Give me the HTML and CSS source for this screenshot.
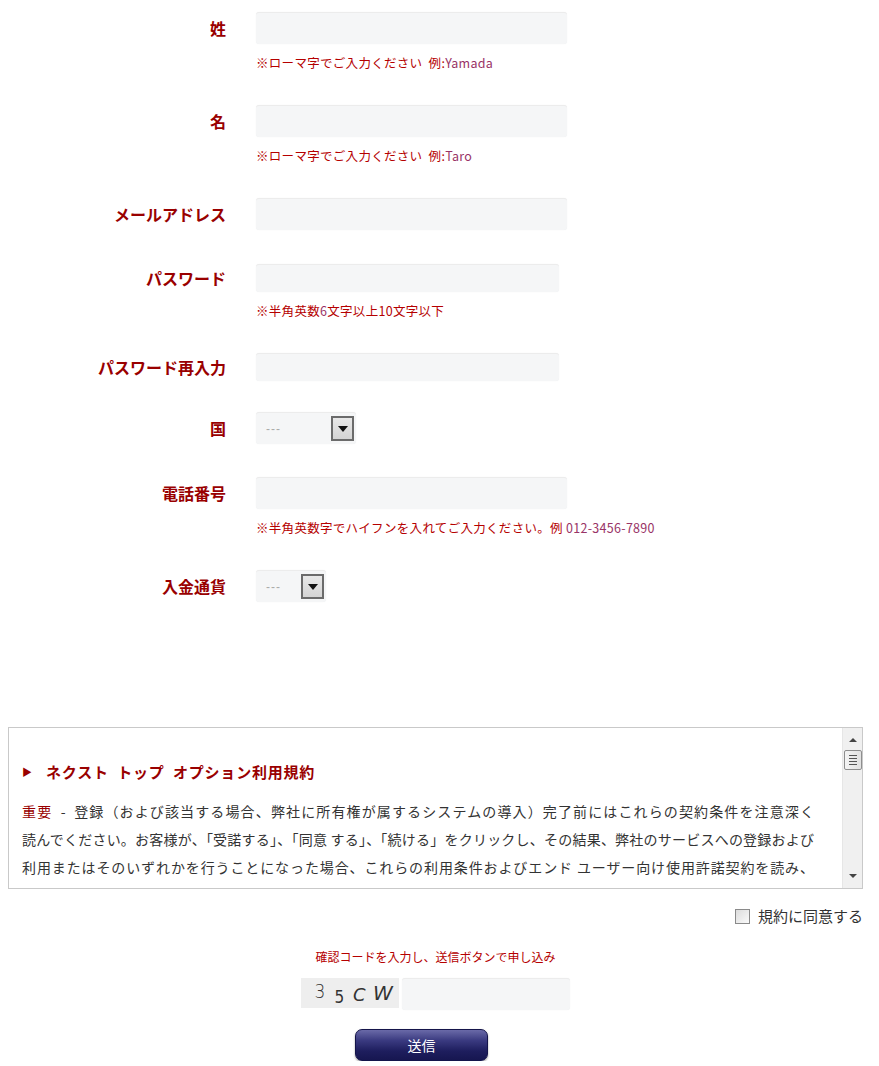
FILE: index.html
```html
<!DOCTYPE html>
<html lang="ja">
<head>
<meta charset="utf-8">
<title>登録フォーム</title>
<link rel="stylesheet" href="styles.css">
</head>
<body>
<div class="page">
  <form class="form">
    <div class="row">
      <label class="lbl">姓</label>
      <div class="field"><input class="inp" type="text"></div>
      <p class="hint">※ローマ字でご入力ください&nbsp; 例:<span class="ex">Yamada</span></p>
    </div>
    <div class="row">
      <label class="lbl">名</label>
      <div class="field"><input class="inp" type="text"></div>
      <p class="hint">※ローマ字でご入力ください&nbsp; 例:<span class="ex">Taro</span></p>
    </div>
    <div class="row">
      <label class="lbl">メールアドレス</label>
      <div class="field"><input class="inp" type="text"></div>
    </div>
    <div class="row">
      <label class="lbl">パスワード</label>
      <div class="field"><input class="inp pw" type="password"></div>
      <p class="hint">※半角英数<span class="ex">6</span>文字以上<span class="num">10</span>文字以下</p>
    </div>
    <div class="row r-tight">
      <label class="lbl">パスワード再入力</label>
      <div class="field"><input class="inp pw" type="password"></div>
    </div>
    <div class="row r-mid">
      <label class="lbl">国</label>
      <div class="field">
        <div class="sel sel-country"><span class="sel-val">---</span><span class="sel-btn"><span class="tri"></span></span></div>
      </div>
    </div>
    <div class="row">
      <label class="lbl">電話番号</label>
      <div class="field"><input class="inp" type="text"></div>
      <p class="hint">※半角英数字でハイフンを入れてご入力ください。例 <span class="ex">012-3456-7890</span></p>
    </div>
    <div class="row r-last">
      <label class="lbl">入金通貨</label>
      <div class="field">
        <div class="sel sel-cur"><span class="sel-val">---</span><span class="sel-btn"><span class="tri"></span></span></div>
      </div>
    </div>
  </form>

  <div class="terms">
    <div class="terms-body">
      <h3 class="terms-title"><span class="arrow">▶</span>ネクスト&nbsp; トップ&nbsp; オプション利用規約</h3>
      <div class="terms-text">
        <span class="tl"><span class="imp">重要</span>&nbsp; -&nbsp; 登録（および該当する場合、弊社に所有権が属するシステムの導入）完了前にはこれらの契約条件を注意深く</span>
        <span class="tl">読んでください。お客様が、「受諾する」、「同意 する」、「続ける」をクリックし、その結果、弊社のサービスへの登録および</span>
        <span class="tl">利用またはそのいずれかを行うことになった場合、これらの利用条件およびエンド ユーザー向け使用許諾契約を読み、</span>
      </div>
    </div>
    <div class="sbar">
      <span class="sb-up"></span>
      <span class="sb-thumb"><i></i><i></i><i></i><i></i></span>
      <span class="sb-fill"></span>
      <span class="sb-down"></span>
    </div>
  </div>

  <div class="agree">
    <label class="agree-lbl"><span class="cbox"></span>規約に同意する</label>
  </div>

  <p class="cap-note">確認コードを入力し、送信ボタンで申し込み</p>
  <div class="cap-row">
    <div class="cap-img"><span class="c1">3</span><span class="c2">5</span><span class="c3">C</span><span class="c4">W</span></div>
    <input class="cap-inp" type="text">
  </div>
  <div class="btn-row">
    <button class="submit" type="button">送信</button>
  </div>
</div>
</body>
</html>
```

FILE: styles.css
```css
* { box-sizing: border-box; }
html, body { margin: 0; padding: 0; background: #fff; }
body {
  font-family: "Noto Sans CJK JP", "Noto Sans", "Liberation Sans", sans-serif;
  color: #333;
}
.page {
  width: 871px;
  padding: 12px 0 0 8px;
}
.form { margin: 0; }
.row {
  display: grid;
  grid-template-columns: 218px 1fr;
  grid-template-rows: 32px auto;
  column-gap: 30px;
  margin-bottom: 34px;
}
.row.r-tight { margin-bottom: 31px; }
.row.r-mid { margin-bottom: 33px; }
.row.r-last { margin-bottom: 125px; }
.row:has(.pw) { grid-template-rows: 28px auto; }
.lbl {
  grid-column: 1;
  grid-row: 1;
  align-self: center;
  text-align: right;
  font-size: 16px;
  font-weight: bold;
  color: #990000;
  line-height: 20px;
  height: 20px;
  white-space: nowrap;
}
.field { grid-column: 2; grid-row: 1; display: flex; }
.inp {
  display: block;
  width: 311px;
  height: 32px;
  border: none;
  border-top: 1px solid #ececec;
  border-radius: 3px;
  background: #f5f6f7;
  box-shadow: 0 0 1px rgba(0,0,0,0.08);
  margin: 0;
  padding: 0 6px;
  outline: none;
}
.inp.pw { width: 303px; height: 28px; }
.hint {
  grid-column: 2;
  grid-row: 2;
  margin: 10px 0 0;
  height: 17px;
  overflow: visible;
  font-size: 12.5px;
  line-height: 17px;
  letter-spacing: 0.3px;
  color: #b50000;
  white-space: nowrap;
}
.hint .ex { color: #993366; }
.hint .num { color: #b50000; }

.sel {
  display: flex;
  align-items: center;
  height: 32px;
  background: #f5f6f7;
  border-top: 1px solid #ececec;
  border-radius: 3px;
  box-shadow: 0 0 1px rgba(0,0,0,0.08);
  padding: 0 2px 0 10px;
}
.sel-country { width: 100px; }
.sel-cur { width: 70px; }
.sel-val {
  flex: 1;
  font-size: 12px;
  color: #aaa;
  font-family: "Liberation Sans", sans-serif;
  letter-spacing: 1px;
}
.sel-btn {
  width: 23px;
  height: 25px;
  border: 2px solid #6b6b6b;
  background: linear-gradient(#e8e8e8, #d4d4d4);
  display: flex;
  align-items: center;
  justify-content: center;
}
.tri {
  width: 0; height: 0;
  border-left: 5px solid transparent;
  border-right: 5px solid transparent;
  border-top: 6px solid #111;
}

.terms {
  width: 855px;
  height: 162px;
  border: 1px solid #c9c9c9;
  display: flex;
  overflow: hidden;
}
.terms-body {
  flex: 1;
  overflow: hidden;
  padding: 30px 0 0 13px;
}
.terms-title {
  margin: 0 0 11px;
  height: 28px;
  font-size: 15px;
  font-weight: bold;
  color: #990000;
  line-height: 28px;
  letter-spacing: 0.8px;
  white-space: nowrap;
}
.arrow {
  display: inline-block;
  font-size: 10px;
  width: 24px;
  letter-spacing: 0;
  vertical-align: 2px;
}
.terms-text {
  font-size: 14px;
  line-height: 28px;
  color: #333;
}
.tl {
  display: block;
  width: 792px;
  height: 28px;
  white-space: nowrap;
  text-align: justify;
  text-align-last: justify;
  text-justify: inter-character;
}
.imp { color: #990000; }
.sbar {
  width: 20px;
  background: #f0f0f0;
  border-left: 1px solid #e6e6e6;
  display: flex;
  flex-direction: column;
  align-items: center;
}
.sb-up, .sb-down {
  width: 0; height: 0;
  border-left: 4px solid transparent;
  border-right: 4px solid transparent;
}
.sb-up { border-bottom: 4px solid #444; margin-top: 10px; }
.sb-down { border-top: 4px solid #444; margin-bottom: 10px; }
.sb-thumb {
  width: 18px;
  height: 20px;
  margin-top: 8px;
  border: 1px solid #8e8e8e;
  border-radius: 2px;
  background: linear-gradient(90deg, #f4f4f4, #e2e2e2);
  display: flex;
  flex-direction: column;
  justify-content: center;
  align-items: center;
  gap: 2px;
}
.sb-thumb i { display: block; width: 8px; height: 1px; background: #555; }
.sb-fill { flex: 1; }

.agree {
  width: 855px;
  display: flex;
  justify-content: flex-end;
  margin-top: 17px;
}
.agree-lbl {
  display: flex;
  align-items: center;
  font-size: 15px;
  line-height: 20px;
  color: #333;
}
.cbox {
  width: 15px;
  height: 15px;
  border: 1px solid #8a8a8a;
  background: linear-gradient(135deg, #dcdcdc, #fafafa);
  margin-right: 8px;
}
.cap-note {
  width: 855px;
  margin: 22px 0 0;
  text-align: center;
  font-size: 12px;
  line-height: 17px;
  color: #b50000;
}
.cap-row {
  width: 855px;
  margin-top: 13px;
  display: flex;
  justify-content: center;
  gap: 3px;
}
.cap-img {
  width: 98px;
  height: 30px;
  background: #eeeeee;
  display: flex;
  align-items: center;
  padding-left: 12px;
  font-family: "DejaVu Sans", sans-serif;
  font-size: 20px;
  color: #333;
}
.cap-img span { display: inline-block; width: 20px; }
.c1 { transform: translateY(-2px) scaleX(0.85); font-weight: 300; }
.c2 { transform: translateY(3px) scaleX(0.85); font-size: 18px; }
.c3 { font-style: italic; font-size: 18px; transform: translateY(1px); }
.c4 { font-style: italic; }
.cap-inp {
  width: 168px;
  height: 32px;
  border: none;
  border-top: 1px solid #ececec;
  border-radius: 3px;
  background: #f5f6f7;
  box-shadow: 0 0 1px rgba(0,0,0,0.08);
  margin: 0;
  outline: none;
}
.btn-row {
  width: 855px;
  margin-top: 19px;
  display: flex;
  justify-content: center;
  padding-right: 28px;
}
.submit {
  width: 133px;
  height: 32px;
  border: 1px solid #14144a;
  border-radius: 7px;
  background: linear-gradient(#6a6aa8 0%, #3a3a80 35%, #1e1e5e 70%, #161650 100%);
  box-shadow: 0 1px 2px rgba(0,0,0,0.4);
  color: #fff;
  font-family: "Noto Sans CJK JP", sans-serif;
  font-size: 14px;
  cursor: pointer;
}
```
